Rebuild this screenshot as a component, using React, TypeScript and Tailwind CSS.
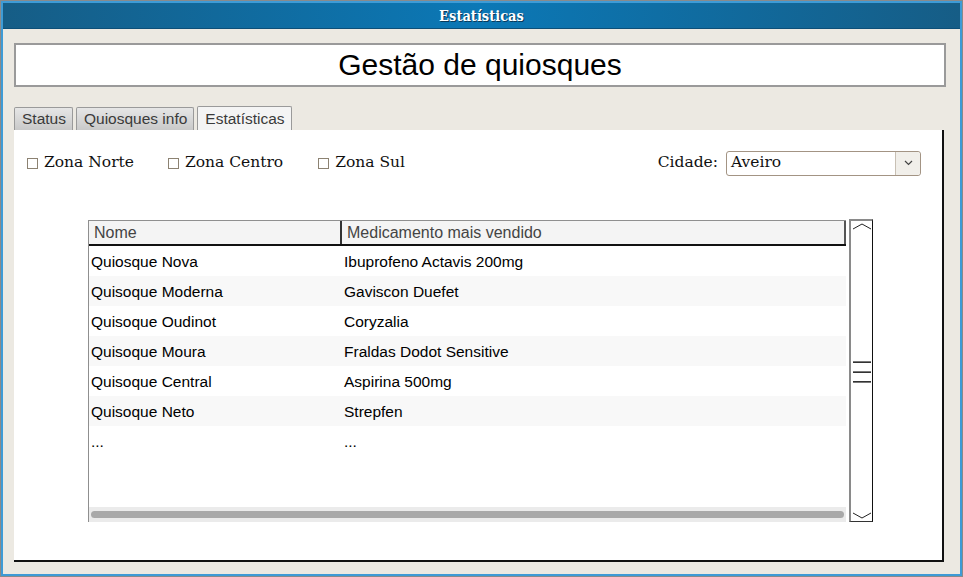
import React from "react";

const rows = [
  ["Quiosque Nova", "Ibuprofeno Actavis 200mg"],
  ["Quisoque Moderna", "Gaviscon Duefet"],
  ["Quisoque Oudinot", "Coryzalia"],
  ["Quisoque Moura", "Fraldas Dodot Sensitive"],
  ["Quisoque Central", "Aspirina 500mg"],
  ["Quisoque Neto", "Strepfen"],
  ["...", "..."],
];

function Check({ label }: { label: string }) {
  return (
    <div className="flex items-center gap-[6px]">
      <div className="w-[11px] h-[11px] border border-[#8c8272] bg-white" />
      <span className="text-[15.5px] text-[#111] [font-family:'DejaVu_Serif',serif]">{label}</span>
    </div>
  );
}

export default function App() {
  return (
    <div className="w-[963px] h-[577px] bg-[#8a8a8a] p-[1px] overflow-hidden">
      <div className="w-full h-full bg-[#3e9bd6] p-[2px] flex flex-col">
        <div className="h-[26px] shrink-0 flex items-center justify-center bg-[linear-gradient(to_right,#165d86,#0b78b6_50%,#165d86)] border-b border-[#0d4f78]">
          <span className="text-white text-[14.5px] font-bold [font-family:'DejaVu_Serif_Condensed','DejaVu_Serif',serif] [font-stretch:condensed] [text-shadow:1px_1px_0_#0a3a5a]">
            Estatísticas
          </span>
        </div>
        <div className="flex-1 bg-[#ece9e2] pl-[11px] pr-[16px] pt-[14px] pb-[12px] flex flex-col">
          <div className="h-[44px] shrink-0 bg-white border-2 border-[#9a9a9a] flex items-center justify-center mr-[-2px]">
            <span className="text-[30px] text-black [font-family:'Liberation_Sans',sans-serif] leading-none">
              Gestão de quiosques
            </span>
          </div>
          <div className="mt-[19px] h-[24px] flex items-end gap-[3px] [font-family:'Liberation_Sans',sans-serif] text-[15.5px] text-[#3a3a3a]">
            <div className="h-[23px] pl-[7px] pr-[6px] flex items-center border border-[#9a9a9a] border-b-0 rounded-t-[2px] bg-[linear-gradient(#e6e6e6,#c9c9c9)]">Status</div>
            <div className="h-[23px] pl-[7px] pr-[6px] flex items-center border border-[#9a9a9a] border-b-0 rounded-t-[2px] bg-[linear-gradient(#e6e6e6,#c9c9c9)]">Quiosques info</div>
            <div className="h-[24px] pl-[7px] pr-[6px] flex items-center border border-[#9a9a9a] border-b-0 rounded-t-[2px] bg-[#f4f4f4]">Estatísticas</div>
          </div>
          <div className="flex-1 bg-white border-r-2 border-b-2 border-[#111] flex flex-col">
            <div className="h-[62px] flex items-center pl-[13px] pr-[21px] pt-[4px]">
              <div className="flex items-center">
                <Check label="Zona Norte" />
                <div className="w-[34px]" />
                <Check label="Zona Centro" />
                <div className="w-[35px]" />
                <Check label="Zona Sul" />
              </div>
              <div className="flex-1" />
              <span className="text-[15.5px] text-[#111] [font-family:'DejaVu_Serif',serif] mr-[8px]">Cidade:</span>
              <div className="w-[195px] h-[25px] border border-[#a39484] rounded-[3px] flex bg-white">
                <span className="flex-1 pl-[4px] flex items-center text-[15.5px] text-[#111] [font-family:'DejaVu_Serif',serif]">Aveiro</span>
                <div className="w-[25px] border-l border-[#c8c0b4] bg-[#f1efea] flex items-center justify-center rounded-r-[3px]">
                  <svg width="9" height="6" viewBox="0 0 9 6"><path d="M1 1 L4.5 4.5 L8 1" stroke="#444" strokeWidth="1.2" fill="none" /></svg>
                </div>
              </div>
            </div>
            <div className="flex ml-[74px] mt-[28px] gap-[3px]">
              <div className="w-[758px] h-[302px] border-l border-t border-[#8f8f8f] flex flex-col [font-family:'Liberation_Sans',sans-serif]">
                <div className="h-[25px] flex bg-[#f4f4f4] border-b-2 border-[#111] text-[16px] text-[#444]">
                  <div className="w-[253px] border-r-2 border-[#333] pl-[5px] flex items-center pt-[1px]">Nome</div>
                  <div className="flex-1 border-r-2 border-[#555] pl-[5px] flex items-center pt-[1px]">Medicamento mais vendido</div>
                </div>
                <div className="flex-1 flex flex-col text-[15.5px] text-black">
                  {rows.map((r, i) => (
                    <div key={i} className={"h-[30px] flex items-center pt-[1px] " + (i % 2 === 1 ? "bg-[#f8f8f8]" : "bg-white")}>
                      <div className="w-[252px] pl-[2px]">{r[0]}</div>
                      <div className="flex-1 pl-[3px]">{r[1]}</div>
                    </div>
                  ))}
                </div>
                <div className="h-[15px] bg-[#ebebeb] flex items-center px-[2px] w-[757px]">
                  <div className="h-[7px] w-full rounded-full bg-[#a9a9a9]" />
                </div>
              </div>
              <div className="w-[24px] h-[303px] -mt-[1px] border-l-2 border-t-2 border-[#8a8a8a] border-r border-r-[#111] border-b border-b-[#333] bg-white flex flex-col items-center justify-between py-[2px]">
                <svg width="20" height="8" viewBox="0 0 20 8"><path d="M1 6 L10 1 L19 6" stroke="#222" strokeWidth="1" fill="none" /></svg>
                <div className="flex flex-col gap-[8px] mt-[2px]">
                  <div className="w-[18px] h-[2px] bg-[linear-gradient(#999,#111)]" />
                  <div className="w-[18px] h-[2px] bg-[linear-gradient(#999,#111)]" />
                  <div className="w-[18px] h-[2px] bg-[linear-gradient(#111,#999)]" />
                </div>
                <svg width="20" height="8" viewBox="0 0 20 8"><path d="M1 2 L10 7 L19 2" stroke="#222" strokeWidth="1" fill="none" /></svg>
              </div>
            </div>
          </div>
        </div>
      </div>
    </div>
  );
}
